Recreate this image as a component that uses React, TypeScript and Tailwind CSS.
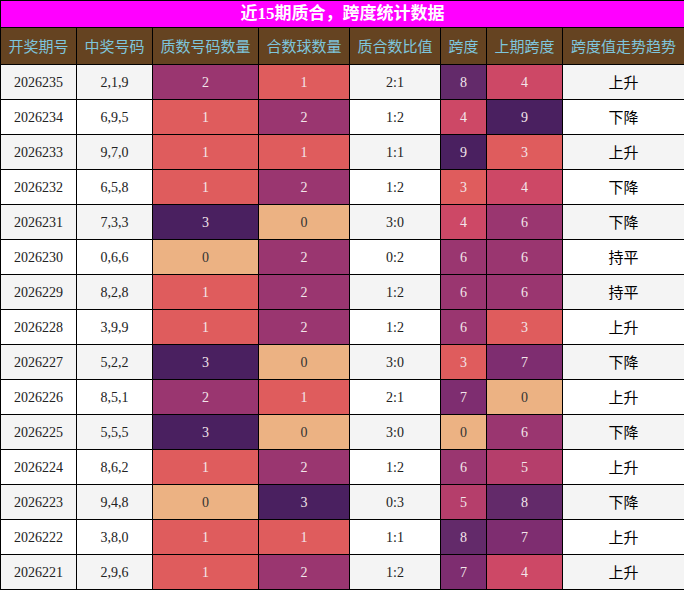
const rows: [string, string, number, number, string, number, number, string][] = [
  ["2026235", "2,1,9", 2, 1, "2:1", 8, 4, "上升"],
  ["2026234", "6,9,5", 1, 2, "1:2", 4, 9, "下降"],
  ["2026233", "9,7,0", 1, 1, "1:1", 9, 3, "上升"],
  ["2026232", "6,5,8", 1, 2, "1:2", 3, 4, "下降"],
  ["2026231", "7,3,3", 3, 0, "3:0", 4, 6, "下降"],
  ["2026230", "0,6,6", 0, 2, "0:2", 6, 6, "持平"],
  ["2026229", "8,2,8", 1, 2, "1:2", 6, 6, "持平"],
  ["2026228", "3,9,9", 1, 2, "1:2", 6, 3, "上升"],
  ["2026227", "5,2,2", 3, 0, "3:0", 3, 7, "下降"],
  ["2026226", "8,5,1", 2, 1, "2:1", 7, 0, "上升"],
  ["2026225", "5,5,5", 3, 0, "3:0", 0, 6, "下降"],
  ["2026224", "8,6,2", 1, 2, "1:2", 6, 5, "上升"],
  ["2026223", "9,4,8", 0, 3, "0:3", 5, 8, "下降"],
  ["2026222", "3,8,0", 1, 1, "1:1", 8, 7, "上升"],
  ["2026221", "2,9,6", 1, 2, "1:2", 7, 4, "上升"],
];

// magma-ish scale, keyed by span value 0-9
const spanColor: Record<number, string> = {
  0: "bg-[#ecb283] text-[#333]",
  1: "bg-[#f2875e] text-[#f3e6ea]",
  2: "bg-[#eb6c5c] text-[#f3e6ea]",
  3: "bg-[#df5c5d] text-[#f3e6ea]",
  4: "bg-[#cd4866] text-[#f3e6ea]",
  5: "bg-[#b53e6b] text-[#f3e6ea]",
  6: "bg-[#9a3670] text-[#f3e6ea]",
  7: "bg-[#7e2d70] text-[#f3e6ea]",
  8: "bg-[#632a6a] text-[#f3e6ea]",
  9: "bg-[#4a2060] text-[#f3e6ea]",
};

const countColor = (n: number) => spanColor[n * 3];

const headers = ["开奖期号", "中奖号码", "质数号码数量", "合数球数量", "质合数比值", "跨度", "上期跨度", "跨度值走势趋势"];
const widths = ["w-[76px]", "w-[76px]", "w-[106px]", "w-[91px]", "w-[91px]", "w-[46px]", "w-[76px]", "w-[122px]"];

export default function App() {
  return (
    <div className="w-[684px] h-[590px] bg-white overflow-hidden text-[14px] text-[#222] font-['Liberation_Serif','Noto_Sans_CJK_SC',serif]">
      <table className="w-full table-fixed border-collapse">
        <colgroup>
          {widths.map((w, i) => (
            <col key={i} className={w} />
          ))}
        </colgroup>
        <thead>
          <tr className="h-[27px]">
            <th colSpan={8} className="border border-black bg-[#ff00ff] p-0 text-[17px] font-bold text-white">
              近15期质合，跨度统计数据
            </th>
          </tr>
          <tr className="h-[37px] bg-[#654321]">
            {headers.map((h) => (
              <th key={h} className="border border-black p-0 text-[15px] font-normal text-[#7ec5dc] font-['Noto_Sans_CJK_SC',sans-serif]">
                {h}
              </th>
            ))}
          </tr>
        </thead>
        <tbody>
          {rows.map((r, i) => {
            const bg = i % 2 === 0 ? "bg-[#f4f4f4]" : "bg-white";
            return (
              <tr key={r[0]} className={`h-[35px] text-center ${bg}`}>
                <td className="border border-black p-0">{r[0]}</td>
                <td className="border border-black p-0">{r[1]}</td>
                <td className={`border border-black p-0 ${countColor(r[2])}`}>{r[2]}</td>
                <td className={`border border-black p-0 ${countColor(r[3])}`}>{r[3]}</td>
                <td className="border border-black p-0">{r[4]}</td>
                <td className={`border border-black p-0 ${spanColor[r[5]]}`}>{r[5]}</td>
                <td className={`border border-black p-0 ${spanColor[r[6]]}`}>{r[6]}</td>
                <td className="border border-black p-0 text-[15px] text-black font-['Noto_Sans_CJK_SC',sans-serif]">{r[7]}</td>
              </tr>
            );
          })}
        </tbody>
      </table>
    </div>
  );
}
